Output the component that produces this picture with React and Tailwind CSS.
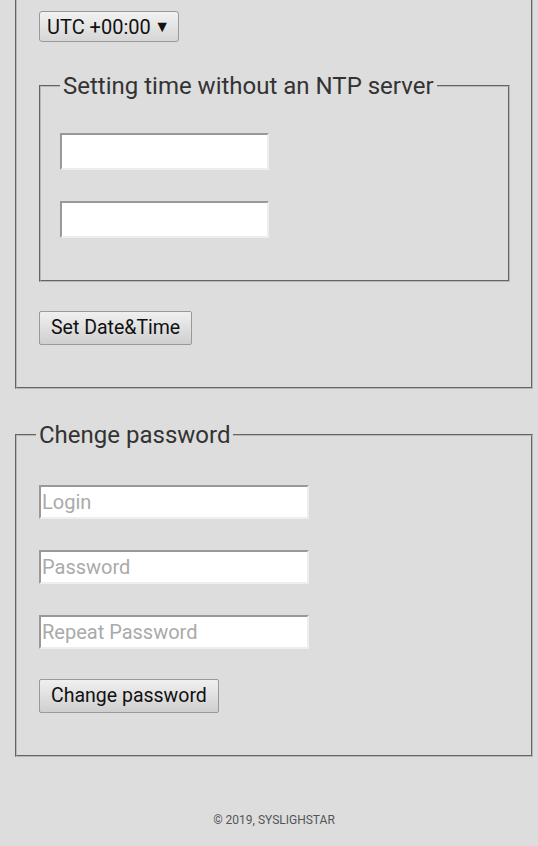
const font = { fontFamily: "Roboto, 'Noto Sans', sans-serif" }

function TextInput({ placeholder = "", className = "" }) {
  return (
    <input
      type="text"
      placeholder={placeholder}
      className={`block border-2 border-t-[#999] border-l-[#999] border-b-[#eee] border-r-[#eee] bg-white px-px text-[20px] text-[#222] placeholder:text-[#aaa] outline-none ${className}`}
    />
  )
}

function Button({ children }) {
  return (
    <button
      type="button"
      className="block h-[34px] rounded-[2px] border border-[#999] bg-gradient-to-b from-[#f0f0f0] to-[#cfcfcf] px-[11px] text-[19.5px] leading-none text-[#111]"
    >
      {children}
    </button>
  )
}

// fieldset edge: 2px groove like the default browser look
const groove = "border-2 border-[#b8b8b8] [--tw-border-style:groove] [border-style:groove]"

export default function App() {
  return (
    <div className="min-h-[846px] overflow-hidden bg-[#dddddd] pl-[15px] pr-[5px]" style={font}>
      <fieldset className={`-mt-[10px] pt-[19px] pb-[42px] pl-[22px] pr-[21px] ${groove}`}>
        <div className="flex h-[31px] w-[140px] items-center justify-between rounded-[3px] border border-[#999] bg-gradient-to-b from-[#f2f2f2] to-[#d6d6d6] pl-[7px] pr-[8px] text-[20px] text-[#111]">
          <span>UTC +00:00</span>
          <span className="text-[16px]">▼</span>
        </div>

        <fieldset className={`mt-[31px] pt-[34px] pb-[42px] pl-[19px] pr-[19px] ${groove}`}>
          <legend className="px-[3px] text-[24px] leading-[26px] text-[#333]">Setting time without an NTP server</legend>
          <TextInput className="h-[37px] w-[209px]" />
          <TextInput className="mt-[31px] h-[37px] w-[209px]" />
        </fieldset>

        <div className="mt-[29px]">
          <Button>Set Date&amp;Time</Button>
        </div>
      </fieldset>

      <fieldset className={`mt-[33px] pt-[37px] pb-[42px] pl-[22px] pr-[21px] ${groove}`}>
        <legend className="-ml-[3px] px-[3px] text-[24px] leading-[26px] text-[#333]">Chenge password</legend>
        <TextInput placeholder="Login" className="h-[34px] w-[270px]" />
        <TextInput placeholder="Password" className="mt-[31px] h-[34px] w-[270px]" />
        <TextInput placeholder="Repeat Password" className="mt-[31px] h-[34px] w-[270px]" />
        <div className="mt-[30px]">
          <Button>Change password</Button>
        </div>
      </fieldset>

      <div className="pt-[54px] text-center text-[12px] text-[#555]">© 2019, SYSLIGHSTAR</div>
    </div>
  )
}
